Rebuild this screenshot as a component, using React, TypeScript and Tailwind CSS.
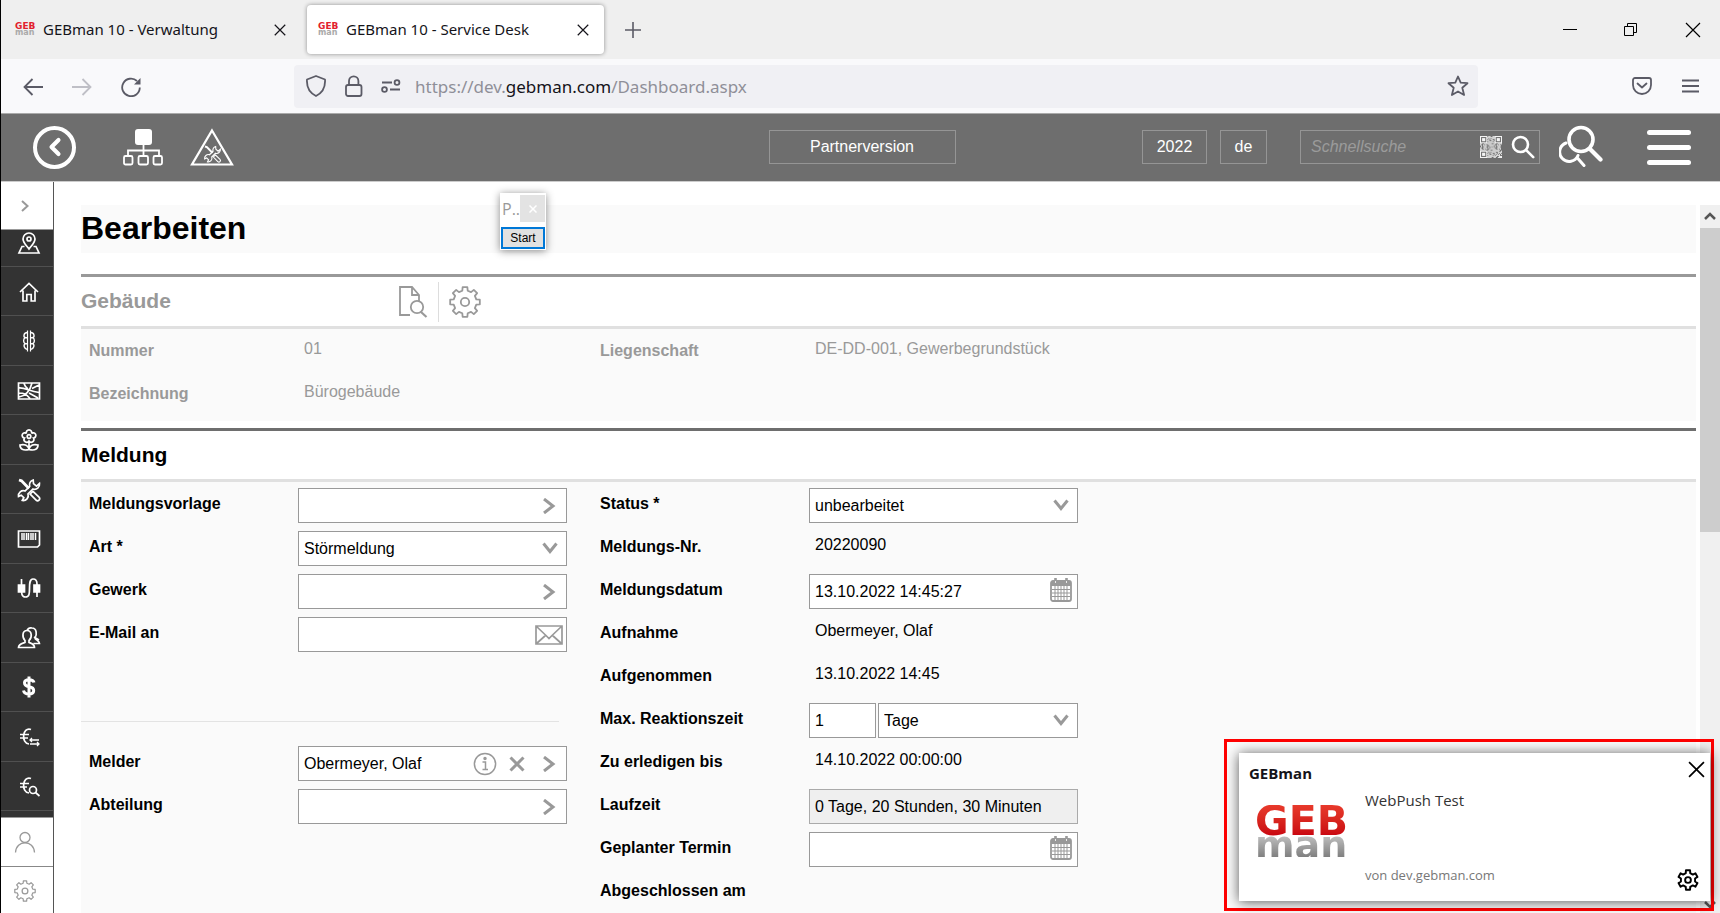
import type { ReactNode } from 'react';
import { LuChevronLeft } from 'react-icons/lu';

type IconProps = { className?: string };

/* ---------- Icons ---------- */

const gearPath = (teeth: number, outer: number, inner: number, c: number) => {
  const step = (Math.PI * 2) / teeth;
  const pts: string[] = [];
  for (let i = 0; i < teeth; i++) {
    const a = i * step - Math.PI / 2;
    [
      [-0.3, inner],
      [-0.2, outer],
      [0.2, outer],
      [0.3, inner],
    ].forEach(([o, r]) => {
      pts.push(`${(c + Math.cos(a + o * step) * r).toFixed(2)} ${(c + Math.sin(a + o * step) * r).toFixed(2)}`);
    });
  }
  return `M${pts.join('L')}Z`;
};

const GearIcon = ({ className, width = 1.6 }: IconProps & { width?: number }) => (
  <svg viewBox="0 0 32 32" className={className} fill="none" stroke="currentColor" strokeWidth={width} strokeLinejoin="round">
    <path d={gearPath(8, 15, 11.6, 16)} />
    <circle cx="16" cy="16" r="4.2" />
  </svg>
);

const CloseIcon = ({ className, width = 1.4 }: IconProps & { width?: number }) => (
  <svg viewBox="0 0 16 16" className={className} fill="none" stroke="currentColor" strokeWidth={width}>
    <path d="M1 1l14 14M15 1L1 15" />
  </svg>
);

const ChevronRight = () => (
  <svg viewBox="0 0 16 16" className="h-4 w-4" fill="none" stroke="currentColor" strokeWidth="3">
    <path d="M3 1l9 7-9 7" />
  </svg>
);

const ChevronDown = () => (
  <svg viewBox="0 0 16 16" className="h-4 w-4" fill="none" stroke="currentColor" strokeWidth="3">
    <path d="M1.5 3.5L8 11.5l6.5-8" />
  </svg>
);

const CrossIcon = () => (
  <svg viewBox="0 0 16 16" className="h-4 w-4" fill="none" stroke="currentColor" strokeWidth="3">
    <path d="M1.5 1.5l13 13M14.5 1.5l-13 13" />
  </svg>
);

const InfoIcon = () => (
  <svg viewBox="0 0 24 24" className="h-6 w-6" fill="none" stroke="currentColor" strokeWidth="1.5">
    <circle cx="12" cy="12" r="10.6" />
    <path d="M9.5 10h3v7.5M9.5 17.5h5.500" />
    <circle cx="12" cy="6.500" r="1" fill="currentColor" />
  </svg>
);

const MailIcon = () => (
  <svg viewBox="0 0 28 20" className="h-5 w-7" fill="none" stroke="currentColor" strokeWidth="1.7">
    <path d="M1 1h26v18H1zM1 1l10 9.5 3 3 3-3L27 1M1 19l10-9M27 19l-10-9" />
  </svg>
);

const CalendarIcon = () => (
  <svg viewBox="0 0 22 24" className="h-6 w-[22px]" fill="none" stroke="currentColor">
    <rect x="1" y="3" width="20" height="20" rx="2" strokeWidth="1.8" />
    <path d="M1 3h20v5H1z" fill="currentColor" stroke="none" />
    <path d="M5.5 0v5M16.500 0v5" strokeWidth="2.6" />
    <path d="M5.5 3v2M16.500 3v2" stroke="#fff" strokeWidth="0.8" />
    <path d="M5 8v14M8 8v14M11 8v14M14 8v14M17 8v14M2 11.500h18M2 15h18M2 18.500h18" strokeWidth="1" />
  </svg>
);

const DocumentSearchIcon = () => (
  <svg viewBox="0 0 30 32" className="h-8 w-[30px]" fill="none" stroke="currentColor" strokeWidth="1.8">
    <path d="M12 29H2V1h12l7 8v6M14 1v8h7" />
    <circle cx="19" cy="21" r="6.2" />
    <path d="M23 26l5.500 5" strokeWidth="2.2" />
  </svg>
);

const OrgChartIcon = () => (
  <svg viewBox="0 0 40 38" className="h-[38px] w-10" fill="none" stroke="currentColor" strokeWidth="1.8">
    <rect x="12" y="1" width="17" height="16" rx="3" fill="currentColor" stroke="none" />
    <path d="M20.500 17v10M5 27v-4.500h31V27" />
    <rect x="1" y="28" width="8.500" height="8.500" rx="1.500" />
    <rect x="15.500" y="28" width="9.500" height="8.500" rx="1.500" />
    <rect x="30.500" y="28" width="8.500" height="8.500" rx="1.500" />
  </svg>
);

const ToolShapes = () => (
  <>
    <path d="M2 2l2.500.8L12 10.500" strokeWidth="2.800" />
    <path d="M14.500 14.500l1.500-1.200 6 5.900a2 2 0 0 1-2.900 2.900l-5.900-6z" />
    <path d="M16.200 2a5 5 0 0 0-3.500 6.300L8 13a5 5 0 0 0-6.500 5.500l2.700-1.300 2.600 2.500-1.500 2.800A5 5 0 0 0 11 16l5-5a5 5 0 0 0 6.500-5.500l-3 2.700-3-2.500z" />
  </>
);

const WarningToolsIcon = () => (
  <svg viewBox="0 0 44 40" className="h-10 w-11" fill="none" stroke="currentColor">
    <path d="M22 3.500L42 37.500H2z" strokeWidth="2.200" />
    <g transform="translate(13.500 18) scale(.75)" strokeWidth="1.500">
      <ToolShapes />
    </g>
  </svg>
);

const QrIcon = () => {
  const cells: ReactNode[] = [];
  for (let y = 0; y < 21; y++) {
    for (let x = 0; x < 21; x++) {
      const finder = (x < 7 && y < 7) || (x > 13 && y < 7) || (x < 7 && y > 13);
      if (!finder && (x * x * 3 + y * y * 7 + x * y * 5 + x) % 13 < 8) {
        cells.push(<rect key={`${x}-${y}`} x={x} y={y} width="1" height="1" />);
      }
    }
  }
  return (
    <svg viewBox="0 0 21 21" className="h-[22px] w-[22px]" fill="#f4f4f4">
      {cells}
      {[[0, 0], [14, 0], [0, 14]].map(([x, y]) => (
        <g key={`${x}/${y}`}>
          <rect x={x + 0.5} y={y + 0.5} width="6" height="6" fill="none" stroke="#f4f4f4" />
          <rect x={x + 2} y={y + 2} width="3" height="3" />
        </g>
      ))}
    </svg>
  );
};

const SearchIcon = () => (
  <svg viewBox="0 0 24 24" className="h-6 w-6" fill="none" stroke="currentColor" strokeWidth="2.6" strokeLinecap="round">
    <circle cx="9.5" cy="9.5" r="7.5" />
    <path d="M15.200 15.200l7 7" />
  </svg>
);

const DoubleSearchIcon = () => (
  <svg viewBox="0 0 44 44" className="h-11 w-11" fill="none" stroke="currentColor" strokeLinecap="round">
    <circle cx="22" cy="14.5" r="12" strokeWidth="3.6" />
    <path d="M31 24l10.500 10.500" strokeWidth="4.2" />
    <path d="M7 18a9.500 9.500 0 1 0 12 12.500M18 32.500l7 8" strokeWidth="3" />
  </svg>
);

/* ---------- Sidebar ---------- */

const SIDEBAR_ITEMS: { label: string; icon: ReactNode }[] = [
  {
    label: 'Gebäude',
    icon: <path d="M3 12l9-8.500 9 8.500M6 10.500V21h3.800v-6.500h4.400V21H18V10.500" />,
  },
  {
    label: 'Anlagen',
    icon: (
      <>
        <path d="M10.500 1.500v21M13.500 1.500v21" strokeWidth="1.2" />
        <path d="M10.500 3.500C6.500 3.500 6 8 8.500 8.700 6 9.500 6 14 8.500 14.700 6 15.500 7 20 10.500 20.500M13.500 3.500c4 0 4.500 4.500 2 5.200 2.500.8 2.500 5.300 0 6 2.500.8 1.500 5.300-2 5.800M8.500 8.700h2M8.500 14.700h2M13.500 8.700h2M13.500 14.700h2" strokeWidth="1.400" />
      </>
    ),
  },
  {
    label: 'Flächen',
    icon: <path d="M1.500 4h21v16h-21zM2 9c6-.5 10 3 20 4.500M2 18c6-1 11-6 13-14M7 4.500c1 3 1.500 4 4 5.500M2 14c5 0 7 1 11 5.500M15 9.500l7-3.500M12 14l9 5" />,
  },
  {
    label: 'Außenanlagen',
    icon: (
      <>
        <circle cx="12" cy="8.5" r="1.800" />
        <path d="M9.500 5.500a2.700 2.700 0 1 1 5 0 2.600 2.600 0 1 1 2 4.500 2.700 2.700 0 1 1-4.500 3 2.700 2.700 0 1 1-4.500-3 2.600 2.600 0 1 1 2-4.500zM12 14v6M12 21c-1-4-5-5-9-4 0 4 3 6 9 4.500 6 1.500 9-.5 9-4.500-4-1-8 0-9 4z" />
      </>
    ),
  },
  { label: 'Service', icon: <ToolShapes /> },
  {
    label: 'Inventar',
    icon: (
      <>
        <path d="M1.500 4h21v14l-2 2h-19z" />
        <path d="M5 6v7M7 6v7M9.500 6v7M11.500 6v7M14 6v7M16 6v7M18.500 6v7" strokeWidth="1.500" />
      </>
    ),
  },
  {
    label: 'Energie',
    icon: (
      <>
        <path d="M4.500 3v7c0 8 0 11 4 11s4-4 4-8.500 0-9.500 3.500-9.500S20 5 20 8v13" />
        <path d="M1.500 9h6v7h-6zM17 9h5.500v7H17z" fill="currentColor" />
      </>
    ),
  },
  {
    label: 'Personen',
    icon: <path d="M10 4.500c-5 0-5 7-2 10v2c-3 1-6.500 1.500-6.500 5h16c0-3.500-3-4-5.500-5v-2c3.500-3 3-10-2-10zM10 4.500c1-2 3-3 5-2.500 5 0 5 7 3 10 0 2 4.500 2.500 4.500 5.500h-6M17 11l5 3" />,
  },
  {
    label: 'Kosten',
    icon: (
      <path d="M17 7.500c-.5-2-2.500-2.800-5-2.800-6 0-6 6 0 7 6.500 1 6 7.300 0 7.300-3 0-5-1-5.500-3.500M12 1.500v21" strokeWidth="3" />
    ),
  },
  {
    label: 'Buchungen',
    icon: (
      <>
        <path d="M14 4.500c-9-3-10 14-2 14.500M3 9.500h9M3 13h8" />
        <path d="M22 15h-9m2-2l-2 2 2 2M13 19h9m-2-2l2 2-2 2" strokeWidth="1.300" />
      </>
    ),
  },
  {
    label: 'Kostensuche',
    icon: (
      <>
        <path d="M14 4.500c-9-3-10 14-2 14.500M3 9.500h9M3 13h7" />
        <circle cx="16" cy="16" r="3.5" />
        <path d="M18.500 18.500l4 3.500" />
      </>
    ),
  },
];

const SidebarIcon = ({ children }: { children: ReactNode }) => (
  <svg viewBox="0 0 24 24" className="h-6 w-6" fill="none" stroke="currentColor" strokeWidth="1.7">
    {children}
  </svg>
);

const Sidebar = () => (
  <nav className="flex w-[53px] shrink-0 flex-col border-r border-[#555] bg-[#333] text-white">
    <button aria-label="Menü öffnen" className="flex h-12 shrink-0 items-center justify-center border-b border-[#999] bg-white pr-1 text-[#999]">
      <svg viewBox="0 0 10 12" className="h-3 w-[10px]" fill="none" stroke="currentColor" strokeWidth="2">
        <path d="M2 1l5.500 5L2 11" />
      </svg>
    </button>
    <button aria-label="Standorte" className="flex h-[37px] shrink-0 justify-center border-b border-[#505050] pt-px pl-1">
      <SidebarIcon>
        <circle cx="12" cy="8" r="2" />
        <path d="M12 18c-3-4-6-6.500-6-10a6 6 0 0 1 12 0c0 3.500-3 6-6 10zM7.500 15.500H5L2 22h20l-3-6.500h-2.500" />
      </SidebarIcon>
    </button>
    {SIDEBAR_ITEMS.map((item) => (
      <button key={item.label} aria-label={item.label} className="flex min-h-0 flex-1 items-center justify-center border-b border-[#505050] pt-px pl-1">
        <SidebarIcon>{item.icon}</SidebarIcon>
      </button>
    ))}
    <div className="h-[7px] shrink-0 border-b border-[#999]" />
    <button aria-label="Benutzer" className="flex h-[49px] shrink-0 items-center justify-center border-b border-[#888] bg-white pr-1 text-[#999]">
      <svg viewBox="0 0 22 22" className="h-[22px] w-[22px]" fill="none" stroke="currentColor" strokeWidth="1.3">
        <circle cx="11" cy="6.500" r="5" />
        <path d="M1.500 21.500C2 8.500 20 8.500 20.500 21.500" />
      </svg>
    </button>
    <button aria-label="Einstellungen" className="flex h-[46px] shrink-0 items-center justify-center bg-white pt-[2px] pr-1 text-[#999]">
      <GearIcon className="h-[22px] w-[22px]" width={1.8} />
    </button>
  </nav>
);

/* ---------- Browser chrome ---------- */

const Favicon = () => (
  <span className="flex w-5 flex-col font-['DejaVu_Sans',sans-serif] font-bold">
    <span className="text-[9px] leading-[7px] text-[#e2202c]">GEB</span>
    <span className="text-[8px] leading-[6px] text-[#aaa]">man</span>
  </span>
);

const TabBar = () => (
  <div className="flex h-[59px] shrink-0 items-center bg-[#efefef] font-['Noto_Sans',sans-serif] text-[15px] text-[#15141a]">
    <div className="flex w-[306px] items-center gap-2 pr-[21px] pl-[14px]">
      <Favicon />
      <span className="flex-1 whitespace-nowrap">GEBman 10 - Verwaltung</span>
      <button aria-label="Tab schließen">
        <CloseIcon className="h-3 w-3" width={1.6} />
      </button>
    </div>
    <div className="flex h-[49px] w-[297px] items-center gap-2 rounded bg-white pr-[15px] pl-[11px] shadow-[0_0_4px_rgba(0,0,0,0.4)]">
      <Favicon />
      <span className="flex-1 whitespace-nowrap">GEBman 10 - Service Desk</span>
      <button aria-label="Tab schließen">
        <CloseIcon className="h-3 w-3" width={1.6} />
      </button>
    </div>
    <button aria-label="Neuer Tab" className="ml-[21px] text-[#5b5b66]">
      <svg viewBox="0 0 16 16" className="h-4 w-4" stroke="currentColor" strokeWidth="1.6">
        <path d="M8 0v16M0 8h16" />
      </svg>
    </button>
    <div className="ml-auto flex items-center gap-[47px] pr-[19px] text-black">
      <button aria-label="Minimieren">
        <svg viewBox="0 0 14 14" className="h-[14px] w-[14px]" stroke="currentColor">
          <path d="M0 6.500h14" />
        </svg>
      </button>
      <button aria-label="Verkleinern">
        <svg viewBox="0 0 14 14" className="h-[14px] w-[14px]" fill="none" stroke="currentColor">
          <path d="M.5 3.500h9v9h-9zM3.500 3.500v-3h9v9h-3" />
        </svg>
      </button>
      <button aria-label="Schließen">
        <CloseIcon className="h-4 w-4" width={1.2} />
      </button>
    </div>
  </div>
);

const AddressBar = () => (
  <div className="flex h-[55px] shrink-0 items-center border-b border-[#aaa] bg-[#f9f9fb] pr-[21px] pl-[22px] text-[#5b5b66]">
    <div className="flex w-[271px] shrink-0 items-center gap-[29px] pt-[2px]">
      <button aria-label="Zurück">
        <svg viewBox="0 0 20 18" className="h-[18px] w-5" fill="none" stroke="currentColor" strokeWidth="1.8">
          <path d="M9.500 1L1.500 9l8 8M1.500 9H20" />
        </svg>
      </button>
      <button aria-label="Vor" className="text-[#bfbfc6]">
        <svg viewBox="0 0 20 18" className="h-[18px] w-5" fill="none" stroke="currentColor" strokeWidth="1.8">
          <path d="M10.500 1l8 8-8 8M18.500 9H0" />
        </svg>
      </button>
      <button aria-label="Neu laden">
        <svg viewBox="0 0 20 20" className="h-5 w-5" fill="none" stroke="currentColor" strokeWidth="1.8">
          <path d="M18.800 10.500A8.800 8.800 0 1 1 16 4" />
          <path d="M19.500 1v6.500h-6.500z" fill="currentColor" stroke="none" />
        </svg>
      </button>
    </div>
    <div className="flex h-[43px] flex-1 items-center gap-[18px] rounded bg-[#f0f0f4] pr-[9px] pl-[11px]">
      <svg viewBox="0 0 22 22" className="h-[22px] w-[22px]" fill="none" stroke="currentColor" strokeWidth="1.8">
        <path d="M11 1l9 3.500c.5 7-2 13-9 16.500C4 17.500 1.500 11.500 2 4.500z" strokeLinejoin="round" />
      </svg>
      <svg viewBox="0 0 18 22" className="h-[22px] w-[18px]" fill="none" stroke="currentColor" strokeWidth="1.8">
        <rect x="1" y="10" width="15.500" height="11" rx="2" />
        <path d="M4 10V6a4.700 4.700 0 0 1 9.400 0v4" />
      </svg>
      <svg viewBox="0 0 20 14" className="h-[14px] w-5" fill="none" stroke="currentColor" strokeWidth="1.8">
        <circle cx="16" cy="3.500" r="2.400" />
        <circle cx="3.500" cy="10.500" r="2.400" />
        <path d="M1 3.500h10M9 10.500h10" />
      </svg>
      <div role="textbox" aria-label="Adresse" tabIndex={0} className="-ml-1 flex-1 pt-px font-['Noto_Sans',sans-serif] text-[17px] text-[#8f8f98]">
        https://dev.<span className="text-[#15141a]">gebman.com</span>/Dashboard.aspx
      </div>
      <button aria-label="Lesezeichen">
        <svg viewBox="0 0 22 22" className="h-[22px] w-[22px]" fill="none" stroke="currentColor" strokeWidth="1.8" strokeLinejoin="round">
          <path d="M11 1.500l2.700 6.200 6.800.5-5.200 4.500 1.800 7.300L11 16.500 4.900 20l1.800-7.300L1.500 8.200l6.800-.5z" />
        </svg>
      </button>
    </div>
    <div className="ml-[154px] flex items-center gap-[30px]">
      <button aria-label="Pocket">
        <svg viewBox="0 0 20 18" className="h-[18px] w-5" fill="none" stroke="currentColor" strokeWidth="1.8" strokeLinecap="round" strokeLinejoin="round">
          <path d="M3 1h14a2 2 0 0 1 2 2v5a9 9 0 0 1-18 0V3a2 2 0 0 1 2-2zM5.500 6.500L10 10.500l4.500-4" />
        </svg>
      </button>
      <button aria-label="Anwendungsmenü">
        <svg viewBox="0 0 17 14" className="h-[14px] w-[17px]" stroke="currentColor" strokeWidth="1.8">
          <path d="M0 1.500h17M0 7h17M0 12.500h17" />
        </svg>
      </button>
    </div>
  </div>
);

/* ---------- App header ---------- */

const Header = () => (
  <header className="flex h-[68px] shrink-0 items-center border-b border-[#ccc] bg-[#6e6e6e] pr-[29px] pb-px pl-8 text-base text-white">
    <div className="flex flex-1 items-center">
      <button aria-label="Zurück" className="flex h-[43px] w-[43px] items-center justify-center rounded-full border-4 border-white">
        <LuChevronLeft className="h-7 w-7" strokeWidth={3.5} />
      </button>
      <button aria-label="Struktur" className="ml-[47px]">
        <OrgChartIcon />
      </button>
      <button aria-label="Störungen" className="ml-[27px]">
        <WarningToolsIcon />
      </button>
    </div>
    <button className="h-[34px] w-[187px] border border-[#959595]">Partnerversion</button>
    <div className="flex flex-1 items-center justify-end">
      <button className="h-[34px] w-[65px] border border-[#959595]">2022</button>
      <button className="ml-[13px] h-[34px] w-[47px] border border-[#959595]">de</button>
      <div className="ml-[33px] flex h-[34px] w-[240px] items-center border border-[#959595] pr-1 pl-[10px]">
        <input aria-label="Schnellsuche" placeholder="Schnellsuche" className="min-w-0 flex-1 bg-transparent italic outline-none placeholder:text-[#9b9b9b]" />
        <button aria-label="QR-Code scannen">
          <QrIcon />
        </button>
        <button aria-label="Suchen" className="ml-[9px]">
          <SearchIcon />
        </button>
      </div>
      <button aria-label="Erweiterte Suche" className="ml-[19px]">
        <DoubleSearchIcon />
      </button>
      <button aria-label="Hauptmenü" className="ml-[44px] flex flex-col gap-[10px]">
        <span className="h-[5px] w-11 rounded-full bg-white" />
        <span className="h-[5px] w-11 rounded-full bg-white" />
        <span className="h-[5px] w-11 rounded-full bg-white" />
      </button>
    </div>
  </header>
);

/* ---------- Form ---------- */

const Row = ({ label, id, children }: { label: string; id?: string; children?: ReactNode }) => (
  <div className="flex h-[43px] items-start">
    {id ? (
      <label htmlFor={id} className="w-[209px] pt-1 font-bold">
        {label}
      </label>
    ) : (
      <span className="w-[209px] pt-1 font-bold">{label}</span>
    )}
    {children}
  </div>
);

const StaticValue = ({ children }: { children: ReactNode }) => <span className="pt-[2px] pl-[6px]">{children}</span>;

const Field = ({ id, value, children }: { id: string; value?: string; children: ReactNode }) => (
  <div className="flex h-[35px] w-[269px] items-center border border-[#999] bg-white pl-[5px] text-[#999]">
    <input id={id} defaultValue={value} className="min-w-0 flex-1 text-black outline-none" />
    {children}
  </div>
);

const ArrowButton = () => (
  <button aria-label="Auswählen" className="mr-[9px]">
    <ChevronRight />
  </button>
);

const SelectField = ({ id, value, className = 'w-[269px]' }: { id: string; value: string; className?: string }) => (
  <div className={`relative h-[35px] text-[#999] ${className}`}>
    <select id={id} aria-label={value} className="h-full w-full appearance-none border border-[#999] bg-white pl-[5px] text-black outline-none">
      <option>{value}</option>
    </select>
    <span className="pointer-events-none absolute top-[9px] right-[9px]">
      <ChevronDown />
    </span>
  </div>
);

const CalendarField = ({ id, value }: { id: string; value?: string }) => (
  <Field id={id} value={value}>
    <button aria-label="Kalender" className="mr-[5px] mb-1">
      <CalendarIcon />
    </button>
  </Field>
);

const BuildingSection = () => (
  <section className="mt-[21px] border-t-[3px] border-[#999] text-[#999]">
    <div className="flex h-[49px] items-center">
      <h2 className="w-[317px] pb-px text-[21px] font-bold">Gebäude</h2>
      <button aria-label="Vorschau">
        <DocumentSearchIcon />
      </button>
      <span className="mx-[10px] h-10 w-px bg-[#ddd]" />
      <button aria-label="Konfigurieren">
        <GearIcon className="h-8 w-8" width={1.8} />
      </button>
    </div>
    <div className="flex h-[95px] border-t-[3px] border-[#e0e0e0] bg-[#fafafa] pt-[6px]">
      <div className="w-[511px] pl-2">
        <Row label="Nummer">
          <StaticValue>01</StaticValue>
        </Row>
        <Row label="Bezeichnung">
          <StaticValue>Bürogebäude</StaticValue>
        </Row>
      </div>
      <div className="pl-2">
        <Row label="Liegenschaft">
          <StaticValue>DE-DD-001, Gewerbegrundstück</StaticValue>
        </Row>
      </div>
    </div>
  </section>
);

const ReportSection = () => (
  <section className="mt-[7px] flex flex-1 flex-col border-t-[3px] border-[#6e6e6e]">
    <h2 className="flex h-12 shrink-0 items-center text-[21px] font-bold">Meldung</h2>
    <div className="flex flex-1 border-t-[3px] border-[#e0e0e0] bg-[#fafafa] pt-[6px]">
      <div className="w-[511px]">
        <div className="pl-2">
          <Row label="Meldungsvorlage" id="vorlage">
            <Field id="vorlage">
              <ArrowButton />
            </Field>
          </Row>
          <Row label="Art *" id="art">
            <SelectField id="art" value="Störmeldung" />
          </Row>
          <Row label="Gewerk" id="gewerk">
            <Field id="gewerk">
              <ArrowButton />
            </Field>
          </Row>
          <Row label="E-Mail an" id="email">
            <Field id="email">
              <button aria-label="E-Mail senden" className="mr-[3px]">
                <MailIcon />
              </button>
            </Field>
          </Row>
        </div>
        <hr className="mt-[61px] mb-6 w-[478px] border-[#e3e3e3]" />
        <div className="pl-2">
          <Row label="Melder" id="melder">
            <Field id="melder" value="Obermeyer, Olaf">
              <button aria-label="Information">
                <InfoIcon />
              </button>
              <button aria-label="Entfernen" className="mr-4 ml-3">
                <CrossIcon />
              </button>
              <ArrowButton />
            </Field>
          </Row>
          <Row label="Abteilung" id="abteilung">
            <Field id="abteilung">
              <ArrowButton />
            </Field>
          </Row>
        </div>
      </div>
      <div className="pl-2">
        <Row label="Status *" id="status">
          <SelectField id="status" value="unbearbeitet" />
        </Row>
        <Row label="Meldungs-Nr.">
          <StaticValue>20220090</StaticValue>
        </Row>
        <Row label="Meldungsdatum" id="datum">
          <CalendarField id="datum" value="13.10.2022 14:45:27" />
        </Row>
        <Row label="Aufnahme">
          <StaticValue>Obermeyer, Olaf</StaticValue>
        </Row>
        <Row label="Aufgenommen">
          <StaticValue>13.10.2022 14:45</StaticValue>
        </Row>
        <Row label="Max. Reaktionszeit" id="reaktion">
          <input id="reaktion" defaultValue="1" className="mr-[2px] h-[35px] w-[67px] border border-[#999] bg-white pl-[5px]" />
          <SelectField id="einheit" value="Tage" className="w-[200px]" />
        </Row>
        <Row label="Zu erledigen bis">
          <StaticValue>14.10.2022 00:00:00</StaticValue>
        </Row>
        <Row label="Laufzeit" id="laufzeit">
          <input id="laufzeit" readOnly value="0 Tage, 20 Stunden, 30 Minuten" className="h-[35px] w-[269px] border border-[#aaa] bg-[#efefef] pl-[5px]" />
        </Row>
        <Row label="Geplanter Termin" id="termin">
          <CalendarField id="termin" />
        </Row>
        <Row label="Abgeschlossen am" />
      </div>
    </div>
  </section>
);

const Scrollbar = () => (
  <div className="mt-[23px] ml-1 flex w-5 shrink-0 flex-col items-center bg-[#f0f0f0] text-[#555]">
    <svg viewBox="0 0 12 8" className="mt-[7px] mb-2 h-2 w-3" fill="none" stroke="currentColor" strokeWidth="2.5">
      <path d="M1 7l5-5 5 5" />
    </svg>
    <div className="h-[304px] w-full bg-[#cdcdcd]" />
    <svg viewBox="0 0 12 8" className="mt-auto mb-1 h-2 w-3" fill="none" stroke="currentColor" strokeWidth="2.5">
      <path d="M1 1l5 5 5-5" />
    </svg>
  </div>
);

/* ---------- Overlays ---------- */

const StartDialog = () => (
  <div className="absolute top-[193px] left-[499px] w-[46px] bg-white shadow-[0_1px_8px_rgba(0,0,0,0.45)]">
    <div className="flex h-[34px] items-start justify-between pt-[2px] pl-[2px]">
      <span className="pt-[2px] font-['Open_Sans',sans-serif] text-base leading-6 text-[#999]">P..</span>
      <button aria-label="Dialog schließen" className="mr-px flex h-[27px] w-[27px] items-center justify-center bg-[#e3e3e3] text-white">
        <CloseIcon className="h-2 w-2" width={3} />
      </button>
    </div>
    <button className="mx-px mb-px block h-[22px] w-11 border-2 border-[#0078d7] bg-[#e1e1e1] text-[12px] leading-none">Start</button>
  </div>
);

const Notification = () => (
  <div className="absolute right-[6px] bottom-[2px] w-[490px] border-[3px] border-[#ff0000] pt-[11px] pr-px pb-[7px] pl-3">
    <div className="relative flex h-[148px] flex-col bg-white px-[10px] pt-2 font-['Open_Sans',sans-serif] shadow-[0_1px_12px_rgba(0,0,0,0.65)]">
      <p className="text-[15px] leading-6 font-bold text-[#15141a]">GEBman</p>
      <div className="flex flex-1">
        <div className="flex w-[116px] flex-col pt-5 pl-[6px] font-['DejaVu_Sans',sans-serif] font-bold">
          <span className="bg-linear-to-b from-[#e8392b] to-[#c8000f] bg-clip-text text-[41px] leading-8 text-transparent">GEB</span>
          <span className="-mt-1 bg-linear-to-b from-[#c8c8c8] to-[#808080] bg-clip-text text-[38px] leading-6 text-transparent">man</span>
        </div>
        <div className="flex flex-1 flex-col">
          <p className="pt-[3px] text-[15px] leading-6 text-[#333]">WebPush Test</p>
          <p className="mt-auto mb-4 text-[13px] leading-5 text-[#777]">von dev.gebman.com</p>
        </div>
      </div>
      <button aria-label="Benachrichtigung schließen" className="absolute top-2 right-[5px]">
        <CloseIcon className="h-[17px] w-[17px]" width={1.6} />
      </button>
      <button aria-label="Benachrichtigungseinstellungen" className="absolute right-[11px] bottom-[10px]">
        <svg viewBox="0 0 32 32" className="h-[22px] w-[22px]" fill="none" stroke="currentColor" strokeWidth="2.8" strokeLinejoin="round">
          <path d={gearPath(6, 14.5, 10.5, 16)} />
          <circle cx="16" cy="16" r="4.2" />
        </svg>
      </button>
    </div>
  </div>
);

const App = () => (
  <div className="relative flex h-screen flex-col overflow-hidden border-l border-black bg-white font-['Liberation_Sans',Arial,sans-serif] text-base text-black">
    <TabBar />
    <AddressBar />
    <Header />
    <div className="flex min-h-0 flex-1">
      <Sidebar />
      <main className="ml-[27px] flex min-w-0 flex-1 flex-col pt-[23px]">
        <h1 className="flex h-12 shrink-0 items-center bg-[#fafafa] pb-[2px] text-[32px] font-bold">Bearbeiten</h1>
        <BuildingSection />
        <ReportSection />
      </main>
      <Scrollbar />
    </div>
    <StartDialog />
    <Notification />
  </div>
);

export default App;
